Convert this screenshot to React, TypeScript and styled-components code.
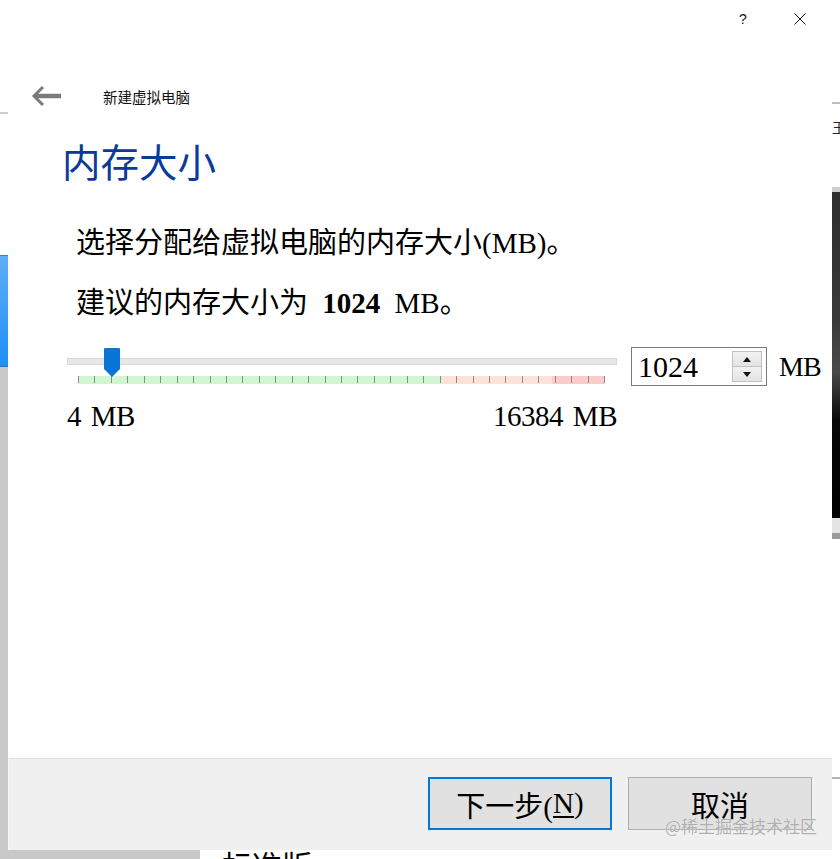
import React from "react";
import styled, { createGlobalStyle } from "styled-components";

const MIX = `"Liberation Serif", "Noto Sans CJK SC", serif`;
const CJK = `"Noto Sans CJK SC", "Liberation Sans", sans-serif`;

const Global = createGlobalStyle`
  html, body { margin: 0; padding: 0; background: #fff; }
  #root { width: 840px; height: 859px; overflow: hidden; }
`;

const Screen = styled.div`
  width: 840px;
  height: 859px;
  display: grid;
  grid-template-columns: 8px 824px 8px;
  grid-template-rows: 850px 9px;
  background: #fff;
  overflow: hidden;
`;

const Edge = styled.div`
  display: flex;
  flex-direction: column;
  overflow: hidden;
`;

const EdgeSegment = styled.div<{ $h: number; $bg: string }>`
  flex: 0 0 ${(p) => p.$h}px;
  background: ${(p) => p.$bg};
`;

const EdgeFill = styled.div<{ $bg: string }>`
  flex: 1;
  background: ${(p) => p.$bg};
`;

const EdgeGlyph = styled.div`
  flex: 0 0 14px;
  font-family: ${CJK};
  font-size: 14px;
  line-height: 14px;
  color: #222;
  white-space: nowrap;
  overflow: hidden;
`;

const Dialog = styled.div`
  display: flex;
  flex-direction: column;
  background: #fff;
  font-family: ${MIX};
  color: #000;
`;

const TitleBar = styled.div`
  height: 38px;
  display: flex;
  justify-content: flex-end;
  align-items: center;
  gap: 17px;
  padding-right: 12px;
`;

const CaptionButton = styled.div`
  width: 40px;
  height: 38px;
  display: flex;
  align-items: center;
  justify-content: center;
  font-family: "Liberation Sans", sans-serif;
  font-size: 14px;
  color: #111;
`;

const Header = styled.div`
  height: 30px;
  margin-top: 43px;
  display: flex;
  align-items: center;
  gap: 41px;
  padding-left: 22px;
`;

const HeaderTitle = styled.span`
  font-family: ${CJK};
  font-size: 14.5px;
  color: #111;
`;

const Heading = styled.h1`
  margin: 25px 0 0 54px;
  font-family: ${CJK};
  font-weight: 400;
  font-size: 38.5px;
  line-height: 48px;
  color: #0b3a98;
`;

const Paragraph = styled.p<{ $top: number }>`
  margin: ${(p) => p.$top}px 0 0 68px;
  font-size: 29px;
  line-height: 40px;
  white-space: nowrap;
  word-spacing: 7px;
`;

const Strong = styled.b`
  font-weight: 700;
`;

const SliderRow = styled.div`
  margin: 24px 0 0 59px;
  display: flex;
  align-items: flex-start;
`;

const SliderColumn = styled.div`
  width: 550px;
  display: flex;
  flex-direction: column;
`;

const TrackArea = styled.div`
  position: relative;
  height: 39px;
`;

const Track = styled.div`
  position: absolute;
  left: 0;
  right: 0;
  top: 11px;
  height: 7px;
  box-sizing: border-box;
  background: #e7e7e7;
  border: 1px solid #d8d8d8;
`;

const TickBand = styled.div`
  position: absolute;
  left: 11px;
  top: 29px;
  width: 527px;
  height: 8px;
  background: linear-gradient(
    to right,
    #d2f6d2 0%,
    #d2f6d2 69%,
    #fde2da 69%,
    #fde2da 90%,
    #fccccc 90%,
    #fccccc 100%
  );
`;

const Tick = styled.div`
  position: absolute;
  top: 0;
  width: 1px;
  height: 7px;
  background: #8c8c8c;
`;

const Thumb = styled.svg`
  position: absolute;
  top: 1px;
`;

const RangeLabels = styled.div`
  margin-top: 15px;
  display: flex;
  justify-content: space-between;
  font-size: 29px;
  line-height: 30px;
  word-spacing: 3px;
  letter-spacing: -0.5px;
`;

const SpinBox = styled.div`
  margin-left: 14px;
  width: 136px;
  height: 39px;
  box-sizing: border-box;
  border: 1px solid #7a7a7a;
  display: flex;
  align-items: center;
  background: #fff;
`;

const SpinValue = styled.span`
  flex: 1;
  padding-left: 6px;
  font-size: 30px;
  line-height: 37px;
`;

const SpinButtons = styled.div`
  width: 30px;
  height: 31px;
  margin-right: 4px;
  display: flex;
  flex-direction: column;
`;

const SpinButton = styled.div`
  flex: 1;
  box-sizing: border-box;
  border: 1px solid #c2c2c2;
  background: linear-gradient(#f2f2f2, #e3e3e3);
  display: flex;
  align-items: center;
  justify-content: center;
  & + & { border-top: none; }
`;

const Unit = styled.span`
  margin-left: 12px;
  font-size: 28px;
  line-height: 39px;
  letter-spacing: -1px;
`;

const Spacer = styled.div`
  flex: 1;
`;

const ButtonBar = styled.div`
  position: relative;
  height: 92px;
  box-sizing: border-box;
  background: #f0f0f0;
  border-top: 1px solid #dfdfdf;
  border-left: 1px solid #f7f7f7;
  display: flex;
  justify-content: flex-end;
  align-items: flex-start;
  gap: 16px;
  padding: 18px 20px 0 0;
`;

const Button = styled.div<{ $primary?: boolean }>`
  width: 184px;
  height: 53px;
  box-sizing: border-box;
  background: #e1e1e1;
  border: ${(p) => (p.$primary ? "2px solid #0078d7" : "1px solid #adadad")};
  display: flex;
  align-items: center;
  justify-content: center;
  font-size: 29px;
  color: #000;
`;

const Mnemonic = styled.u`
  text-underline-offset: 3px;
`;

const Watermark = styled.span`
  position: absolute;
  right: 15px;
  bottom: 13px;
  font-family: ${CJK};
  font-size: 17px;
  line-height: 22px;
  color: rgba(150, 150, 150, 0.75);
  text-shadow: 0 0 1px rgba(255, 255, 255, 0.9);
`;

const BottomStrip = styled.div`
  grid-column: 1 / -1;
  display: flex;
  overflow: hidden;
`;

const BottomGray = styled.div`
  width: 200px;
  background: #c8c8c8;
`;

const BottomText = styled.div`
  padding-left: 22px;
  font-family: ${CJK};
  font-size: 30px;
  line-height: 30px;
  margin-top: -1px;
  color: #000;
`;

const MIN = 4;
const MAX = 16384;
const VALUE = 1024;
const BAND_LEFT = 11;
const BAND_W = 527;

function BackArrow() {
  return (
    <svg width="32" height="24" viewBox="0 0 32 24">
      <path d="M31 12 H6" stroke="#7b7b7b" strokeWidth="4.5" fill="none" />
      <path d="M13 3 L4 12 L13 21" stroke="#7b7b7b" strokeWidth="3" fill="none" strokeLinejoin="miter" />
    </svg>
  );
}

function CloseGlyph() {
  return (
    <svg width="12" height="12" viewBox="0 0 12 12">
      <path d="M0.5 0.5 L11.5 11.5 M11.5 0.5 L0.5 11.5" stroke="#111" strokeWidth="1" />
    </svg>
  );
}

function Triangle({ up }: { up?: boolean }) {
  return (
    <svg width="8" height="5" viewBox="0 0 8 5">
      <path d={up ? "M0 5 L4 0 L8 5 Z" : "M0 0 L8 0 L4 5 Z"} fill="#111" />
    </svg>
  );
}

export default function App() {
  const ticks = Array.from({ length: 33 }, (_, i) => i);
  const frac = (VALUE - MIN) / (MAX - MIN);
  const thumbCenter = BAND_LEFT + frac * BAND_W + 1;

  return (
    <>
      <Global />
      <Screen>
        <Edge>
          <EdgeSegment $h={112} $bg="#fff" />
          <EdgeSegment $h={2} $bg="#cfcfcf" />
          <EdgeSegment $h={141} $bg="#fff" />
          <EdgeSegment $h={1} $bg="#2d7fd0" />
          <EdgeSegment $h={110} $bg="linear-gradient(#5eaef5, #1e8ff6)" />
          <EdgeSegment $h={1} $bg="#2d6fb8" />
          <EdgeFill $bg="#c9c9c9" />
        </Edge>

        <Dialog>
          <TitleBar>
            <CaptionButton>?</CaptionButton>
            <CaptionButton>
              <CloseGlyph />
            </CaptionButton>
          </TitleBar>

          <Header>
            <BackArrow />
            <HeaderTitle>新建虚拟电脑</HeaderTitle>
          </Header>

          <Heading>内存大小</Heading>

          <Paragraph $top={39}>选择分配给虚拟电脑的内存大小(MB)。</Paragraph>
          <Paragraph $top={20}>
            建议的内存大小为 <Strong>1024</Strong> MB。
          </Paragraph>

          <SliderRow>
            <SliderColumn>
              <TrackArea>
                <Track />
                <TickBand>
                  {ticks.map((i) => (
                    <Tick key={i} style={{ left: `${(i * (BAND_W - 1)) / 32}px` }} />
                  ))}
                </TickBand>
                <Thumb
                  width="16"
                  height="29"
                  viewBox="0 0 16 29"
                  style={{ left: `${thumbCenter - 8}px` }}
                >
                  <path d="M0 1 Q0 0 1 0 H15 Q16 0 16 1 V21 L8 29 L0 21 Z" fill="#0a74d6" />
                </Thumb>
              </TrackArea>
              <RangeLabels>
                <span>4 MB</span>
                <span>16384 MB</span>
              </RangeLabels>
            </SliderColumn>

            <SpinBox>
              <SpinValue>1024</SpinValue>
              <SpinButtons>
                <SpinButton>
                  <Triangle up />
                </SpinButton>
                <SpinButton>
                  <Triangle />
                </SpinButton>
              </SpinButtons>
            </SpinBox>
            <Unit>MB</Unit>
          </SliderRow>

          <Spacer />

          <ButtonBar>
            <Button $primary>
              下一步(<Mnemonic>N</Mnemonic>)
            </Button>
            <Button>取消</Button>
            <Watermark>@稀土掘金技术社区</Watermark>
          </ButtonBar>
        </Dialog>

        <Edge>
          <EdgeSegment $h={102} $bg="#fff" />
          <EdgeSegment $h={2} $bg="#bdbdbd" />
          <EdgeSegment $h={16} $bg="#fff" />
          <EdgeGlyph>王</EdgeGlyph>
          <EdgeSegment $h={53} $bg="#fff" />
          <EdgeSegment $h={5} $bg="#cfcfcf" />
          <EdgeSegment
            $h={326}
            $bg="linear-gradient(#2e2e2e, #3a3a3a 40%, #4a4a4a 55%, #0a0a0a 70%, #000)"
          />
          <EdgeSegment $h={15} $bg="#e4e4e4" />
          <EdgeSegment $h={6} $bg="#9a9a9a" />
          <EdgeSegment $h={238} $bg="#fff" />
          <EdgeSegment $h={2} $bg="#b5b5b5" />
          <EdgeFill $bg="#fff" />
        </Edge>

        <BottomStrip>
          <BottomGray />
          <BottomText>标准版</BottomText>
        </BottomStrip>
      </Screen>
    </>
  );
}
